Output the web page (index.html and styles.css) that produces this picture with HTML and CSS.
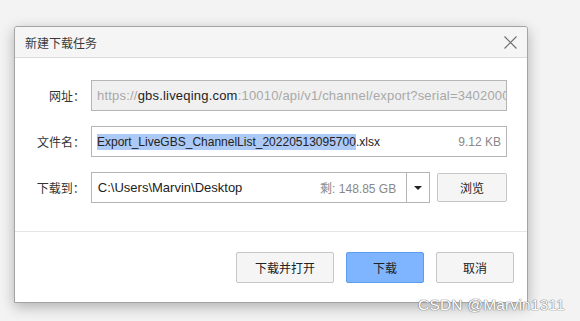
FILE: index.html
```html
<!DOCTYPE html>
<html lang="zh-CN">
<head>
    <meta charset="UTF-8">
    <meta name="viewport" content="width=device-width, initial-scale=1.0">
    <title>新建下载任务</title>
    <link rel="stylesheet" href="styles.css">
</head>
<body>
    <div class="dialog">
        <div class="dialog-title">
            <span>新建下载任务</span>
            <button class="close" type="button" aria-label="关闭">
                <svg width="13" height="13" viewBox="0 0 13 13">
                    <path d="M0.5 0.5 L12.5 12.5 M12.5 0.5 L0.5 12.5" stroke="#6b6b6b" stroke-width="1.1" fill="none"/>
                </svg>
            </button>
        </div>

        <div class="dialog-body">
            <div class="row">
                <label class="row-label">网址：</label>
                <div class="field field-disabled url">
                    <span class="muted">https://</span><span class="host">gbs.liveqing.com</span><span class="muted">:10010/api/v1/channel/export?serial=3402000</span>
                </div>
            </div>
            <div class="row">
                <label class="row-label">文件名：</label>
                <div class="field">
                    <span class="filename"><span class="selected">Export_LiveGBS_ChannelList_20220513095700</span>.xlsx</span>
                    <span class="hint">9.12 KB</span>
                </div>
            </div>
            <div class="row">
                <label class="row-label">下载到：</label>
                <div class="combo">
                    <div class="combo-input">
                        <span class="filename path">C:\Users\Marvin\Desktop</span>
                        <span class="hint">剩: 148.85 GB</span>
                    </div>
                    <div class="combo-arrow"><span class="triangle"></span></div>
                </div>
                <button class="btn btn-browse" type="button">浏览</button>
            </div>
        </div>

        <div class="dialog-footer">
            <button class="btn btn-wide" type="button">下载并打开</button>
            <button class="btn btn-primary" type="button">下载</button>
            <button class="btn" type="button">取消</button>
        </div>
    </div>

    <div class="watermark">CSDN @Marvin1311</div>
</body>
</html>
```

FILE: styles.css
```css
body {
    margin: 0;
    background-color: #f3f3f3;
    font-family: "Liberation Sans", "Noto Sans CJK SC", sans-serif;
    font-size: 12px;
    color: #333;
    width: 580px;
    height: 321px;
    overflow: hidden;
}
.dialog {
    box-sizing: border-box;
    width: 514px;
    height: 277px;
    margin: 26px 0 0 14px;
    background-color: #fff;
    border: 1px solid #a4a4a4;
    border-radius: 3px 3px 0 0;
    box-shadow: 0 4px 14px rgba(0, 0, 0, 0.28);
    display: flex;
    flex-direction: column;
}
.dialog-title {
    height: 30px;
    background-color: #f5f5f5;
    border-bottom: 1px solid #dcdcdc;
    border-radius: 3px 3px 0 0;
    display: flex;
    align-items: center;
    justify-content: space-between;
    padding: 0 10px 0 10px;
    color: #3a3a3a;
}
.close {
    border: none;
    background: none;
    padding: 0;
    width: 13px;
    height: 13px;
    display: flex;
}
.dialog-body {
    padding: 22px 20px 28px 0;
    display: flex;
    flex-direction: column;
    gap: 15px;
    border-bottom: 1px solid #e6e6e6;
}
.row {
    display: flex;
    height: 31px;
    align-items: stretch;
}
.row-label {
    width: 70px;
    margin-right: 6px;
    text-align: right;
    align-self: center;
}
.field {
    flex: 1;
    box-sizing: border-box;
    border: 1px solid #b5b5b5;
    padding: 0 5px;
    display: flex;
    align-items: center;
    white-space: nowrap;
    overflow: hidden;
    color: #222;
}
.field-disabled {
    background-color: #f0f0f0;
}
.url {
    font-size: 13px;
    letter-spacing: 0.2px;
}
.muted {
    color: #a8a8a8;
}
.host {
    color: #1e1e1e;
}
.filename {
    flex: 1;
    color: #222;
}
.path {
    font-size: 13px;
}
.selected {
    display: inline-block;
    line-height: 16px;
    background-color: #adc9f5;
}
.hint {
    color: #888;
}
.combo {
    box-sizing: border-box;
    width: 340px;
    border: 1px solid #b5b5b5;
    display: flex;
}
.combo-input {
    flex: 1;
    display: flex;
    align-items: center;
    padding: 0 10px 0 6px;
    border-right: 1px solid #b5b5b5;
    white-space: nowrap;
}
.combo-arrow {
    width: 22px;
    display: flex;
    align-items: center;
    justify-content: center;
}
.triangle {
    width: 0;
    height: 0;
    border-left: 4px solid transparent;
    border-right: 4px solid transparent;
    border-top: 4px solid #222;
}
.btn {
    box-sizing: border-box;
    width: 78px;
    height: 31px;
    background-color: #f5f5f5;
    border: 1px solid #c6c6c6;
    border-radius: 2px;
    font-family: inherit;
    font-size: 12px;
    color: #222;
    padding: 0;
}
.btn-browse {
    width: 70px;
    height: 29px;
    margin: 1px 0 0 7px;
}
.dialog-footer {
    display: flex;
    justify-content: flex-end;
    gap: 12px;
    padding: 20px 13px 0 0;
}
.btn-wide {
    width: 98px;
}
.btn-primary {
    background-color: #7fb5ff;
    border-color: #5a9df2;
}
.watermark {
    position: absolute;
    left: 418px;
    top: 296px;
    font-family: "Liberation Sans", Arial, sans-serif;
    font-size: 15.5px;
    color: #fff;
    text-shadow: 0 0 1px #777, 0 0 1px #777, 0 0 1px #888;
    letter-spacing: 0.2px;
}
```
